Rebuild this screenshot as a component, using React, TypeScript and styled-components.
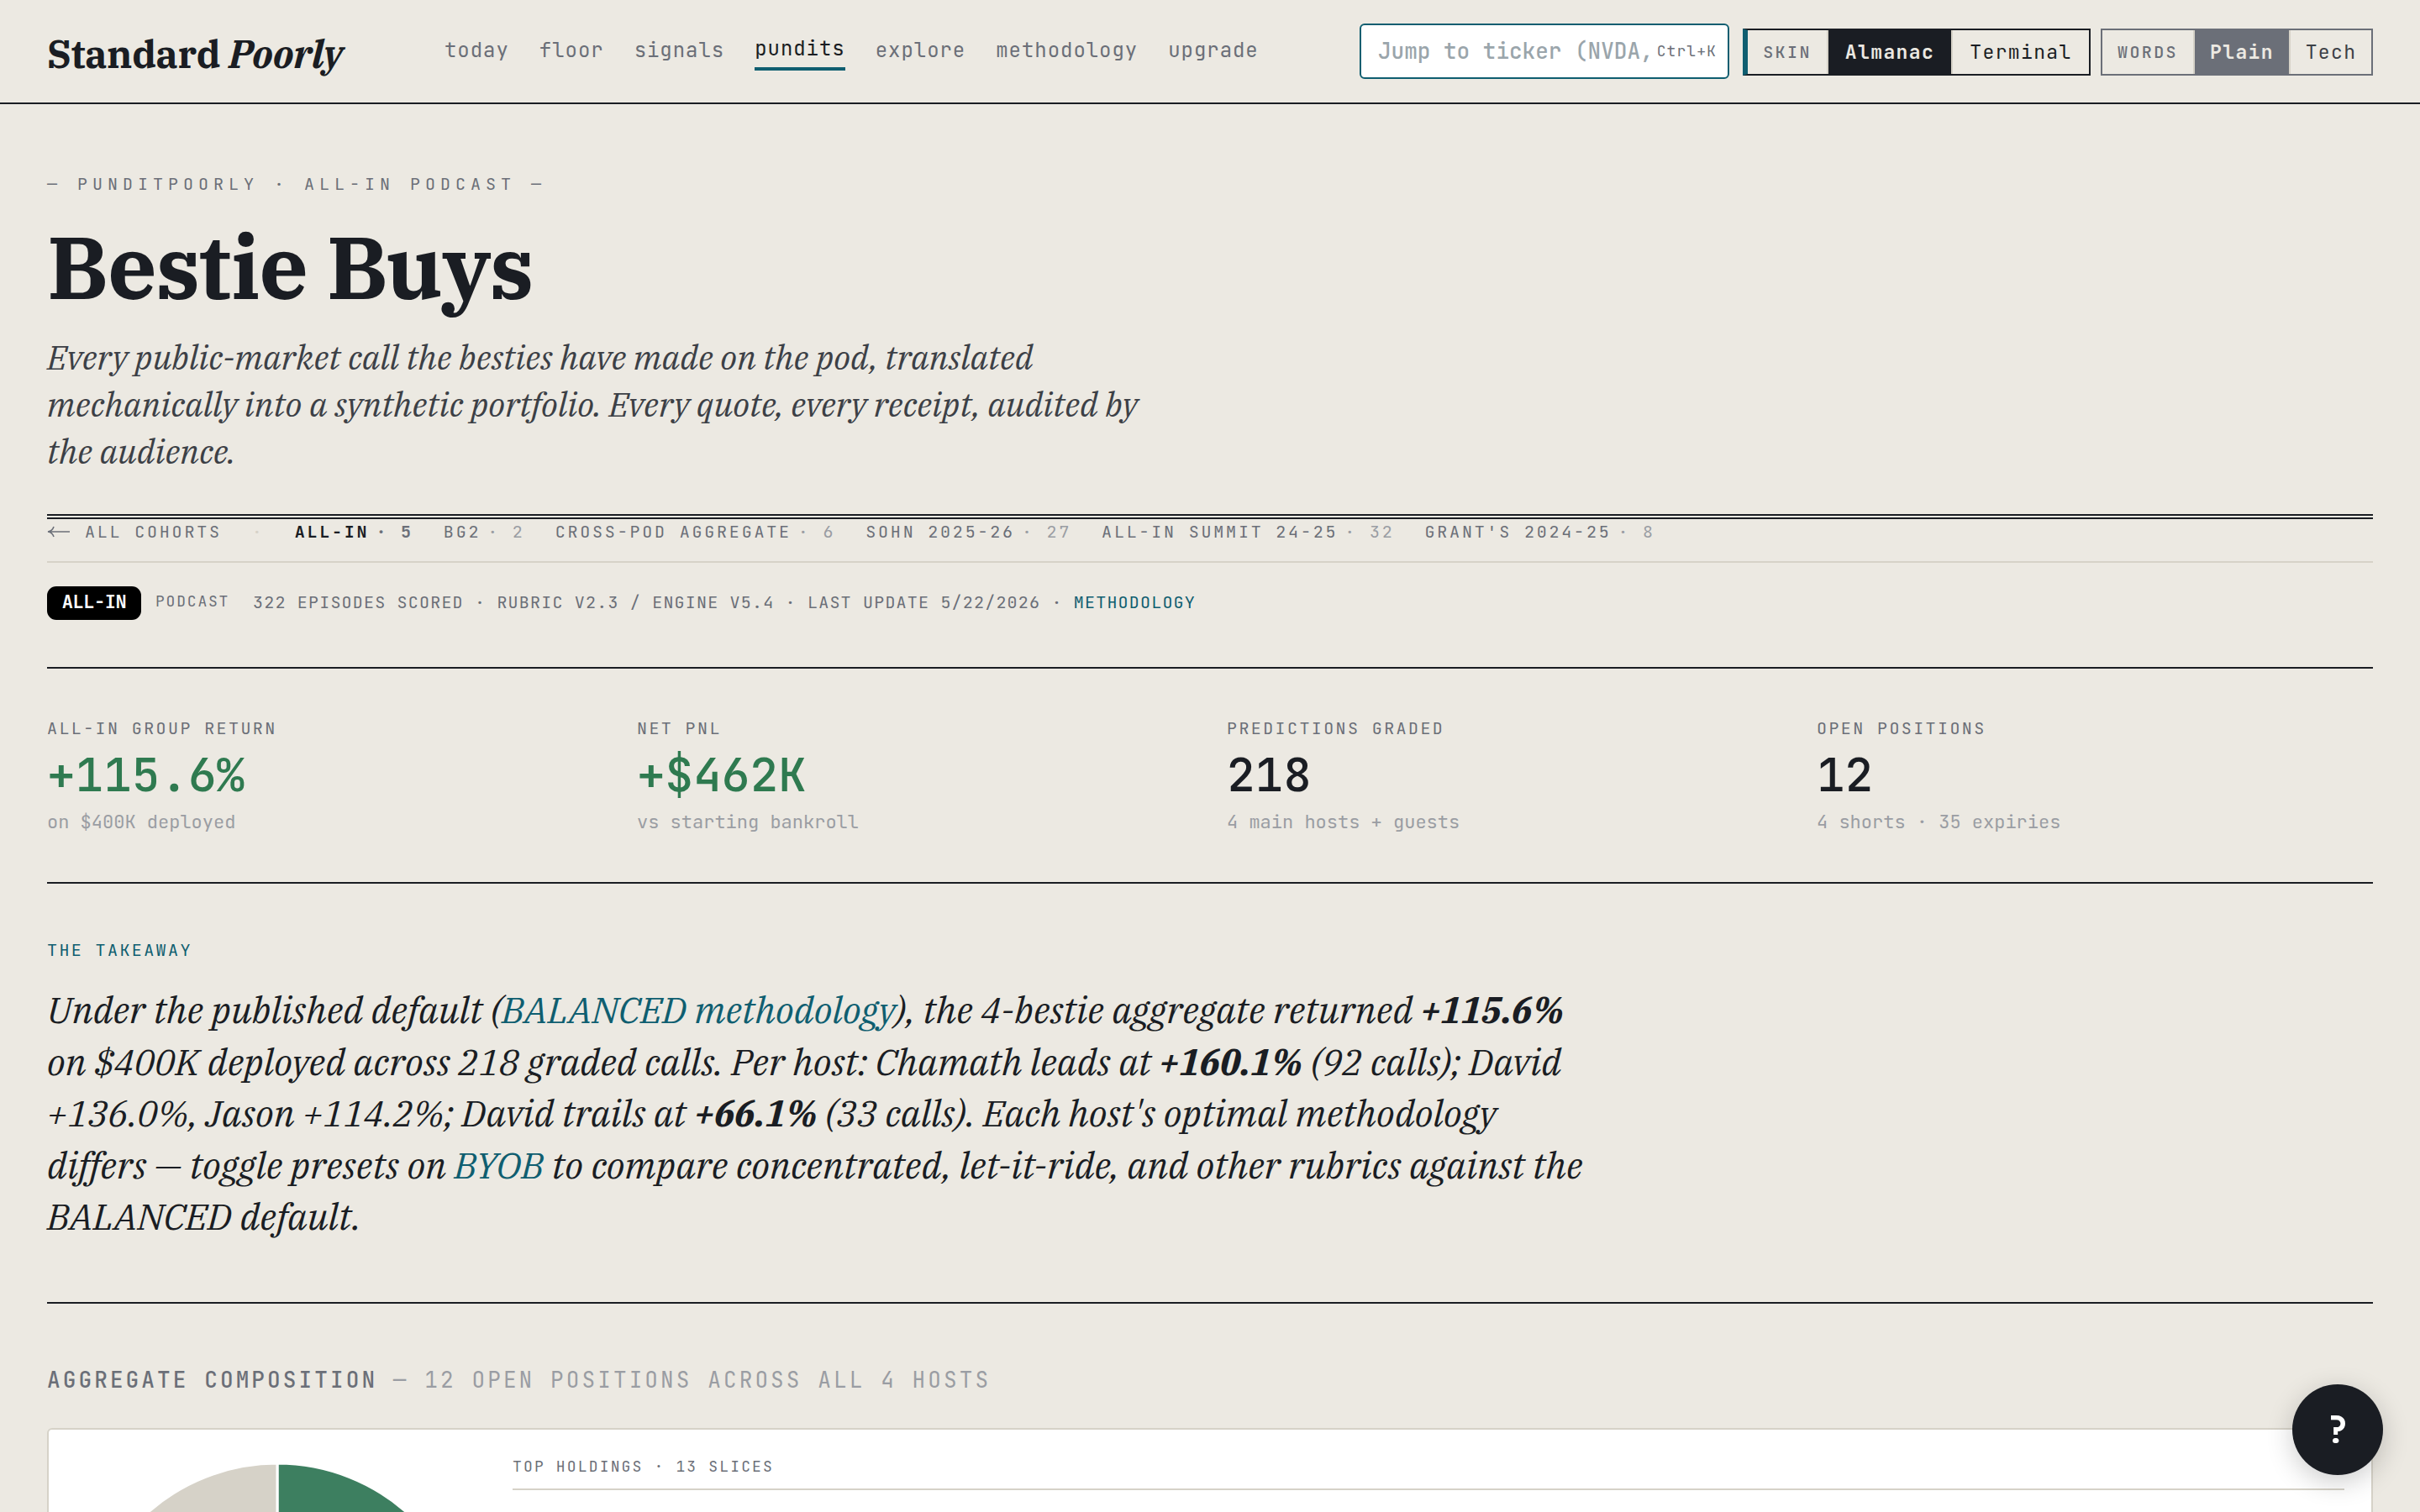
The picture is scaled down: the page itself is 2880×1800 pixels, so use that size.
import React from "react";
import styled, { createGlobalStyle } from "styled-components";

const c = {
  paper: "#ece9e2",
  ink: "#1a1d23",
  soft: "#3c4046",
  grey: "#6b6f78",
  faint: "#9a9da3",
  line: "#d6d2c8",
  teal: "#0f5e70",
  gain: "#2f7a50",
};
const mono = `"JetBrains Mono", "DejaVu Sans Mono", "Liberation Mono", monospace`;
const serif = `"IBM Plex Serif", "Noto Serif", "Liberation Serif", serif`;

const Global = createGlobalStyle`
  *, *::before, *::after { box-sizing: border-box; }
  html, body { margin: 0; background: ${c.paper}; overflow: hidden; }
  a { color: inherit; text-decoration: none; }
`;

/* Monospace run; $track is the letter spacing in em */
const Mono = styled.span<{ $size: number; $track?: number; $color?: string; $lh?: number; $weight?: number }>`
  font-family: ${mono};
  font-size: ${(p) => p.$size}px;
  letter-spacing: ${(p) => p.$track ?? 0}em;
  color: ${(p) => p.$color ?? c.grey};
  line-height: ${(p) => p.$lh ?? 28}px;
  font-weight: ${(p) => p.$weight ?? 400};
  white-space: pre;
`;

const Page = styled.div`
  height: 1800px;
  width: 2880px;
  overflow: hidden;
  background: ${c.paper};
  color: ${c.ink};
`;

const Header = styled.header`
  display: flex;
  align-items: center;
  height: 124px;
  padding: 0 56px;
  border-bottom: 2px solid ${c.ink};
`;

const Brand = styled.a`
  width: 473px;
  padding-top: 5px;
  font: 700 46px/50px ${serif};
  letter-spacing: -0.01em;
  white-space: nowrap;
`;

const Nav = styled.nav`
  display: flex;
  align-items: center;
  gap: 36px;
  width: 1089px;
`;

const NavLink = styled.a<{ $active?: boolean }>`
  font: 400 24px/39px ${mono};
  letter-spacing: 0.04em;
  padding-bottom: 3px;
  color: ${(p) => (p.$active ? c.ink : c.grey)};
  border-bottom: ${(p) => (p.$active ? `4px solid ${c.teal}` : "0")};
`;

const Search = styled.label`
  display: flex;
  align-items: center;
  justify-content: space-between;
  width: 440px;
  height: 66px;
  padding: 0 13px 0 20px;
  background: #fff;
  border: 2px solid ${c.teal};
  border-radius: 6px;
`;

const Toggle = styled.div<{ $tone: string; $accent?: boolean; $gap: number }>`
  display: flex;
  height: 56px;
  margin: 2px 0 0 ${(p) => p.$gap}px;
  border: 2px solid ${(p) => p.$tone};
  ${(p) => p.$accent && `border-left: 6px solid ${c.teal};`}
`;

const Segment = styled.span<{ $w: number; $fill?: string; $last?: boolean }>`
  display: flex;
  align-items: center;
  justify-content: center;
  width: ${(p) => p.$w}px;
  background: ${(p) => p.$fill ?? "transparent"};
  background-clip: padding-box;
  border-right: ${(p) => (p.$last ? "0" : `2px solid ${c.line}`)};
`;

const Main = styled.main`
  display: flex;
  flex-direction: column;
  padding: 81px 56px 0;
`;

const Hero = styled.section`
  display: flex;
  flex-direction: column;
  height: 413px;
  border-bottom: 6px double ${c.ink};
`;

const Title = styled.h1`
  margin: 29px 0 25px;
  font: 700 104px/110px ${serif};
  letter-spacing: -0.0125em;
`;

const Tagline = styled.p`
  margin: 0;
  font: italic 400 40px/56px ${serif};
  color: ${c.soft};
  white-space: nowrap;
`;

const Cohorts = styled.nav`
  display: flex;
  align-items: flex-start;
  gap: 36px;
  height: 52px;
  padding-top: 1px;
  border-bottom: 2px solid ${c.line};
`;

const BackLink = styled.a`
  display: flex;
  align-items: center;
  gap: 17px;
`;

const Cohort = styled.a`
  display: flex;
  gap: 8px;
`;

const Meta = styled.section`
  display: flex;
  height: 126px;
  padding-top: 28px;
  border-bottom: 2px solid ${c.ink};
`;

const Badge = styled.span`
  display: flex;
  justify-content: center;
  width: 112px;
  height: 40px;
  margin-right: 17px;
  border-radius: 11px;
  background: #000;
`;

const Kind = styled(Mono)`
  width: 116px;
`;

const Stats = styled.section`
  display: grid;
  grid-template-columns: repeat(4, 1fr);
  column-gap: 40px;
  height: 256px;
  padding-top: 59px;
  border-bottom: 2px solid ${c.ink};
`;

const Stat = styled.div`
  display: flex;
  flex-direction: column;
`;

const Figure = styled(Mono)`
  margin: 15px 0 15px;
`;

const Takeaway = styled.section`
  display: flex;
  flex-direction: column;
  height: 500px;
  padding-top: 67px;
  border-bottom: 2px solid ${c.ink};
`;

const Lede = styled.p`
  margin: 28px 0 0;
  font: italic 400 44px/61.5px ${serif};
  white-space: nowrap;
  a { color: ${c.teal}; }
`;

const SectionTitle = styled.h2`
  display: flex;
  margin: 75px 0 41px;
`;

const Card = styled.section`
  display: flex;
  gap: 40px;
  height: 560px;
  padding: 32px;
  background: #fff;
  border: 2px solid ${c.line};
  border-radius: 6px;
`;

const Holdings = styled.div`
  flex: 1;
  height: 40px;
  display: flex;
  border-bottom: 2px solid ${c.line};
`;

const Help = styled.button`
  position: fixed;
  right: 44px;
  bottom: 44px;
  display: flex;
  align-items: center;
  justify-content: center;
  width: 108px;
  height: 108px;
  padding: 0;
  border: 0;
  border-radius: 50%;
  background: ${c.ink};
  box-shadow: 0 8px 32px rgba(0, 0, 0, 0.2);
`;

const links = ["today", "floor", "signals", "pundits", "explore", "methodology", "upgrade"];
const cohorts: [string, string][] = [
  ["ALL-IN", "5"],
  ["BG2", "2"],
  ["CROSS-POD AGGREGATE", "6"],
  ["SOHN 2025-26", "27"],
  ["ALL-IN SUMMIT 24-25", "32"],
  ["GRANT'S 2024-25", "8"],
];
const stats = [
  { label: "ALL-IN GROUP RETURN", value: "+115.6%", note: "on $400K deployed", gain: true },
  { label: "NET PNL", value: "+$462K", note: "vs starting bankroll", gain: true },
  { label: "PREDICTIONS GRADED", value: "218", note: "4 main hosts + guests" },
  { label: "OPEN POSITIONS", value: "12", note: "4 shorts · 35 expiries" },
];

export default function App() {
  return (
    <Page>
      <Global />
      <Header>
        <Brand>
          Standard <em>Poorly</em>
        </Brand>
        <Nav>
          {links.map((l) => (
            <NavLink key={l} $active={l === "pundits"}>{l}</NavLink>
          ))}
        </Nav>
        <Search>
          <Mono $size={26} $color="#9aa5ab" $weight={500}>Jump to ticker (NVDA,</Mono>
          <Mono $size={18} $track={0.06}>Ctrl+K</Mono>
        </Search>
        <Toggle $tone={c.ink} $accent $gap={16}>
          <Segment $w={96}><Mono $size={20} $track={0.12} $weight={500}>SKIN</Mono></Segment>
          <Segment $w={148} $fill={c.ink}><Mono $size={23} $track={0.06} $color={c.paper} $weight={700}>Almanac</Mono></Segment>
          <Segment $w={162} $last><Mono $size={23} $track={0.06} $color={c.ink}>Terminal</Mono></Segment>
        </Toggle>
        <Toggle $tone={c.grey} $gap={12}>
          <Segment $w={110}><Mono $size={20} $track={0.12} $weight={500}>WORDS</Mono></Segment>
          <Segment $w={114} $fill={c.grey}><Mono $size={23} $track={0.06} $color={c.paper} $weight={700}>Plain</Mono></Segment>
          <Segment $w={96} $last><Mono $size={23} $track={0.06} $color={c.soft}>Tech</Mono></Segment>
        </Toggle>
      </Header>
      <Main>
        <Hero>
          <Mono $size={20} $track={0.3}>— PUNDITPOORLY · ALL-IN PODCAST —</Mono>
          <Title>Bestie Buys</Title>
          <Tagline>
            Every public-market call the besties have made on the pod, translated<br />
            mechanically into a synthetic portfolio. Every quote, every receipt, audited by<br />
            the audience.
          </Tagline>
        </Hero>
        <Cohorts>
          <BackLink>
            <svg width="28" height="14" viewBox="0 0 28 14" fill="none" stroke={c.grey} strokeWidth="1.6">
              <path d="M27 7H2M8 1C7 4 4.500 6.500 1 7C4.500 7.500 7 10 8 13" />
            </svg>
            <Mono $size={20} $track={0.14}>ALL COHORTS</Mono>
          </BackLink>
          <Mono $size={20} $track={0.14} $color={c.line}>·</Mono>
          {cohorts.map(([name, count], i) => (
            <Cohort key={name}>
              <Mono $size={20} $track={0.14} $weight={i === 0 ? 700 : 400} $color={i === 0 ? c.ink : c.grey}>{name}</Mono>
              <Mono $size={20} $track={0.14} $weight={i === 0 ? 600 : 400} $color={i === 0 ? c.grey : c.faint}>{`· ${count}`}</Mono>
            </Cohort>
          ))}
        </Cohorts>
        <Meta>
          <Badge><Mono $size={22} $track={-0.02} $lh={38} $color="#fff" $weight={700}>ALL-IN</Mono></Badge>
          <Kind $size={18} $track={0.1} $lh={36}>PODCAST</Kind>
          <Mono $size={20} $track={0.06} $lh={39}>{"322 EPISODES SCORED · RUBRIC V2.3 / ENGINE V5.4 · LAST UPDATE 5/22/2026 · "}</Mono>
          <Mono as="a" $size={20} $track={0.06} $lh={39} $color={c.teal}>METHODOLOGY</Mono>
        </Meta>
        <Stats>
          {stats.map((s) => (
            <Stat key={s.label}>
              <Mono $size={20} $track={0.12} $lh={24}>{s.label}</Mono>
              <Figure $size={56} $lh={56} $color={s.gain ? c.gain : c.ink} $weight={500}>{s.value}</Figure>
              <Mono $size={22} $color={c.faint}>{s.note}</Mono>
            </Stat>
          ))}
        </Stats>
        <Takeaway>
          <Mono $size={20} $track={0.12} $lh={24} $color={c.teal}>THE TAKEAWAY</Mono>
          <Lede>
            Under the published default (<a>BALANCED methodology</a>), the 4-bestie aggregate returned <strong>+115.6%</strong><br />
            on $400K deployed across 218 graded calls. Per host: Chamath leads at <strong>+160.1%</strong> (92 calls); David<br />
            +136.0%, Jason +114.2%; David trails at <strong>+66.1%</strong> (33 calls). Each host's optimal methodology<br />
            differs — toggle presets on <a>BYOB</a> to compare concentrated, let-it-ride, and other rubrics against the<br />
            BALANCED default.
          </Lede>
        </Takeaway>
        <SectionTitle>
          <Mono $size={26} $track={0.12} $lh={32} $weight={500}>{"AGGREGATE COMPOSITION "}</Mono>
          <Mono $size={26} $track={0.12} $lh={32} $color={c.faint}>— 12 OPEN POSITIONS ACROSS ALL 4 HOSTS</Mono>
        </SectionTitle>
        <Card>
          <svg width="480" height="480" viewBox="0 0 480 480" stroke="#fff" strokeWidth="3">
            <path d="M240 240V8A232 232 0 0 1 240 472Z" fill="#3d7f60" />
            <path d="M240 240V472A232 232 0 0 1 240 8Z" fill="#d6d2c8" />
          </svg>
          <Holdings>
            <Mono $size={18} $track={0.12} $lh={24}>TOP HOLDINGS · 13 SLICES</Mono>
          </Holdings>
        </Card>
      </Main>
      <Help aria-label="Help">
        <Mono $size={44} $lh={44} $color="#fff" $weight={700}>?</Mono>
      </Help>
    </Page>
  );
}
